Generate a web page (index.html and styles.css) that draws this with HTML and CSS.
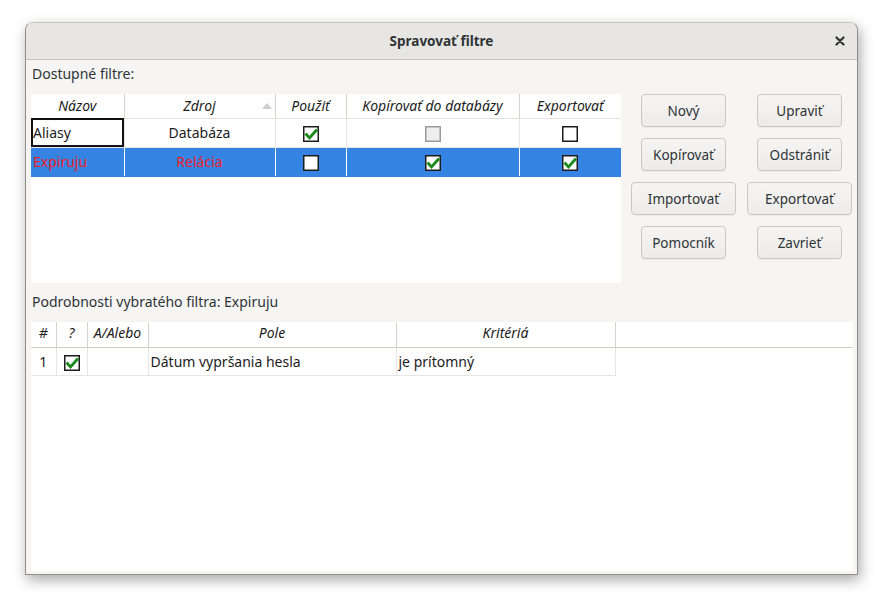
FILE: index.html
```html
<!DOCTYPE html>
<html lang="sk">
<head>
<meta charset="utf-8">
<title>Spravovať filtre</title>
<link rel="stylesheet" href="styles.css">
</head>
<body>
<div class="window">
  <div class="titlebar">
    <span class="title">Spravovať filtre</span>
    <span class="close">
      <svg width="10" height="10" viewBox="0 0 10 10"><path d="M1.5 1.5 L8.5 8.5 M8.5 1.5 L1.5 8.5" stroke="#2e3436" stroke-width="2.2" stroke-linecap="round"/></svg>
    </span>
  </div>
  <div class="content">
    <div class="label">Dostupné filtre:</div>
    <div class="top">
      <div class="list">
        <table class="grid grid1">
          <colgroup><col class="c1"><col class="c2"><col class="c3"><col class="c4"><col class="c5"></colgroup>
          <thead>
            <tr><th>Názov</th><th class="sorted">Zdroj<span class="sort"></span></th><th>Použiť</th><th>Kopírovať do databázy</th><th>Exportovať</th></tr>
          </thead>
          <tbody>
            <tr>
              <td class="left focus">Aliasy</td>
              <td>Databáza</td>
              <td><span class="cb checked"><svg width="16" height="16" viewBox="0 0 16 16"><rect x="0.75" y="0.75" width="14.5" height="14.5" fill="#fff" stroke="#1c1c1c" stroke-width="1.5"/><path d="M2.5 7.5 L6.5 12 L14 3.5" fill="none" stroke="#1a8a1a" stroke-width="2.8"/></svg></span></td>
              <td><span class="cb"><svg width="16" height="16" viewBox="0 0 16 16"><rect x="0.75" y="0.75" width="14.5" height="14.5" fill="#eeeeee" stroke="#9a9a9a" stroke-width="1.5"/></svg></span></td>
              <td><span class="cb"><svg width="16" height="16" viewBox="0 0 16 16"><rect x="0.75" y="0.75" width="14.5" height="14.5" fill="#fff" stroke="#1c1c1c" stroke-width="1.5"/></svg></span></td>
            </tr>
            <tr class="selected">
              <td class="left">Expiruju</td>
              <td>Relácia</td>
              <td><span class="cb"><svg width="16" height="16" viewBox="0 0 16 16"><rect x="0.75" y="0.75" width="14.5" height="14.5" fill="#fff" stroke="#1c1c1c" stroke-width="1.5"/></svg></span></td>
              <td><span class="cb"><svg width="16" height="16" viewBox="0 0 16 16"><rect x="0.75" y="0.75" width="14.5" height="14.5" fill="#fff" stroke="#1c1c1c" stroke-width="1.5"/><path d="M2.5 7.5 L6.5 12 L14 3.5" fill="none" stroke="#1a8a1a" stroke-width="2.8"/></svg></span></td>
              <td><span class="cb"><svg width="16" height="16" viewBox="0 0 16 16"><rect x="0.75" y="0.75" width="14.5" height="14.5" fill="#fff" stroke="#1c1c1c" stroke-width="1.5"/><path d="M2.5 7.5 L6.5 12 L14 3.5" fill="none" stroke="#1a8a1a" stroke-width="2.8"/></svg></span></td>
            </tr>
          </tbody>
        </table>
      </div>
      <div class="buttons">
        <button class="btn">Nový</button>
        <button class="btn">Upraviť</button>
        <button class="btn">Kopírovať</button>
        <button class="btn">Odstrániť</button>
        <button class="btn wide">Importovať</button>
        <button class="btn wide">Exportovať</button>
        <button class="btn">Pomocník</button>
        <button class="btn">Zavrieť</button>
      </div>
    </div>
    <div class="label label2">Podrobnosti vybratého filtra: Expiruju</div>
    <div class="details">
      <table class="grid grid2">
        <colgroup><col class="d1"><col class="d2"><col class="d3"><col class="d4"><col class="d5"><col class="d6"></colgroup>
        <thead>
          <tr><th>#</th><th>?</th><th>A/Alebo</th><th>Pole</th><th>Kritériá</th><th class="empty"></th></tr>
        </thead>
        <tbody>
          <tr>
            <td>1</td>
            <td><span class="cb"><svg width="16" height="16" viewBox="0 0 16 16"><rect x="0.75" y="0.75" width="14.5" height="14.5" fill="#fff" stroke="#1c1c1c" stroke-width="1.5"/><path d="M2.5 7.5 L6.5 12 L14 3.5" fill="none" stroke="#1a8a1a" stroke-width="2.8"/></svg></span></td>
            <td></td>
            <td class="left">Dátum vypršania hesla</td>
            <td class="left">je prítomný</td>
            <td class="empty"></td>
          </tr>
        </tbody>
      </table>
    </div>
  </div>
</div>
</body>
</html>
```

FILE: styles.css
```css
* { box-sizing: border-box; }
html, body { margin: 0; padding: 0; }
body {
  background: #ffffff;
  width: 883px;
  height: 603px;
  padding: 22px 0 0 25px;
  font-family: "Noto Sans", "DejaVu Sans", sans-serif;
  font-size: 14px;
  color: #2e3436;
  overflow: hidden;
}
.window {
  width: 833px;
  height: 553px;
  background: #f6f5f4;
  border: 1px solid #8e8e8e;
  border-top-color: #c8c6c2;
  border-radius: 8px 8px 0 0;
  box-shadow: 2px 5px 14px rgba(0,0,0,0.35);
  display: flex;
  flex-direction: column;
  overflow: hidden;
}
.titlebar {
  height: 37px;
  flex: none;
  background: #e8e6e3;
  border-bottom: 1px solid #c5c1bc;
  display: flex;
  align-items: center;
  justify-content: center;
  position: relative;
}
.title {
  font-weight: bold;
  font-size: 13.5px;
  color: #2e3436;
}
.close {
  position: absolute;
  right: 12px;
  top: 13px;
  width: 10px;
  height: 10px;
  display: flex;
}
.content {
  flex: 1;
  display: flex;
  flex-direction: column;
  padding: 0 4px 3px 5px;
}
.label {
  height: 34px;
  line-height: 28px;
  padding-left: 1px;
  color: #2e3436;
}
.label2 {
  height: 39px;
  line-height: 38px;
}
.top {
  display: flex;
  height: 189px;
}
.list {
  width: 590px;
  height: 189px;
  background: #fff;
  flex: none;
}
.grid {
  border-collapse: collapse;
  table-layout: fixed;
  font-size: 14px;
}
.grid th {
  font-weight: normal;
  font-style: italic;
  height: 24px;
  padding: 0;
  text-align: center;
  border-left: 1px solid #d6d2ce;
  border-bottom: 1px solid #e2dfdc;
  color: #1c1c1c;
  position: relative;
  white-space: nowrap;
}
.grid th:first-child { border-left: none; }
.grid td {
  padding: 0 2px;
  text-align: center;
  border-left: 1px solid #e6e6e6;
  border-bottom: 1px solid #e6e6e6;
  color: #1c1c1c;
  white-space: nowrap;
}
.grid td:first-child { border-left: none; }
.grid td.left { text-align: left; }
.grid1 { width: 590px; }
.grid1 tbody tr { height: 29px; }
.c1 { width: 93px; }
.c2 { width: 151px; }
.c3 { width: 71px; }
.c4 { width: 173px; }
.c5 { width: 102px; }
.grid1 td.focus {
  outline: 2px solid #111;
  outline-offset: -2px;
}
.grid1 tr.selected td {
  background: #3584e4;
  color: #ed1c24;
  border-left-color: #ffffff;
  border-bottom-color: #3584e4;
}
.grid1 tr.selected td:first-child { border-left: none; }
.grid1 td.left { padding-left: 2px; }
.sort {
  position: absolute;
  right: 3px;
  top: 9px;
  width: 0;
  height: 0;
  border-left: 5px solid transparent;
  border-right: 5px solid transparent;
  border-bottom: 6px solid #cfcfcf;
}
.cb {
  display: inline-flex;
  vertical-align: middle;
}
.buttons {
  margin-left: 10px;
  display: grid;
  grid-template-columns: 105px 105px;
  column-gap: 11px;
  row-gap: 11px;
  grid-auto-rows: 33px;
  justify-items: center;
  align-content: start;
}
.btn {
  width: 85px;
  height: 33px;
  font-family: inherit;
  font-size: 13.5px;
  color: #2e3436;
  background: linear-gradient(#f6f5f4, #edebe9);
  border: 1px solid #cdc7c2;
  border-radius: 4px;
  padding: 0;
  box-shadow: 0 1px 0 rgba(0,0,0,0.04);
}
.btn.wide { width: 105px; }
.details {
  flex: 1;
  background: #fff;
}
.grid2 { width: 821px; }
.d1 { width: 25px; }
.d2 { width: 31px; }
.d3 { width: 61px; }
.d4 { width: 248px; }
.d5 { width: 219px; }
.d6 { width: 237px; }
.grid2 th { border-bottom: 1px solid #cfcac5; height: 25px; padding-bottom: 4px; }
.grid2 th.empty { border-left: 1px solid #d6d2ce; }
.grid2 tbody tr { height: 28px; }
.grid2 td.empty { border: none; border-left: 1px solid #e6e6e6; }
.grid2 td.left { padding-left: 2px; }
```
